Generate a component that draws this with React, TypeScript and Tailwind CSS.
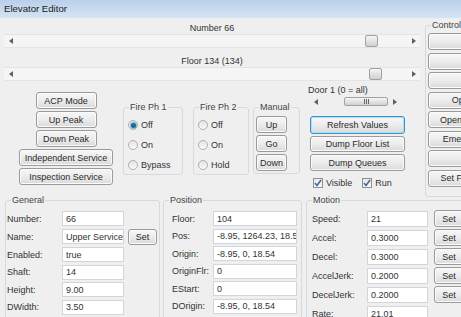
import React from 'react';

type Kids = { children?: React.ReactNode; className?: string };

const Btn: React.FC<Kids & { focus?: boolean }> = ({ children, className = '', focus }) => (
  <div
    className={`flex shrink-0 items-center justify-center overflow-hidden whitespace-nowrap rounded-[3px] border bg-linear-to-b from-[#f7f7f7] via-[#ececec] to-[#dadada] text-[#2a2a2a] ${
      focus ? 'border-[#3d8ec9] shadow-[inset_0_0_0_1px_#a9e1fb]' : 'border-[#9a9a9a] shadow-[inset_0_0_0_1px_#fbfbfb]'
    } ${className}`}
  >
    {children}
  </div>
);

const Group: React.FC<Kids & { label: string }> = ({ label, children, className = '' }) => (
  <div className={`relative shrink-0 rounded-[3px] border border-[#d6dadf] ${className}`}>
    <span className="absolute left-[5px] top-[-7px] whitespace-nowrap bg-[#efefef] px-[1px] leading-[12px] text-[#444]">{label}</span>
    {children}
  </div>
);

const Arrow: React.FC<{ dir: 'l' | 'r' }> = ({ dir }) => (
  <div className="flex w-[13px] shrink-0 items-center justify-center">
    <svg width="4" height="6" viewBox="0 0 4 6">
      <path d={dir === 'l' ? 'M4 0 L0 3 L4 6 Z' : 'M0 0 L4 3 L0 6 Z'} fill="#606060" />
    </svg>
  </div>
);

const Scroll: React.FC<{ className?: string; thumb: string; grip?: boolean }> = ({ className = '', thumb, grip }) => (
  <div className={`flex border-y border-[#e4e4e4] bg-[#f5f5f5] ${className}`}>
    <Arrow dir="l" />
    <div className="flex flex-1 items-center">
      <div
        className={`flex h-full items-center justify-center rounded-[2px] border border-[#a2a2a2] bg-linear-to-b from-[#f6f6f6] to-[#d0d0d0] ${thumb}`}
      >
        {grip && (
          <div className="flex gap-[1px]">
            <div className="h-[5px] w-[1px] bg-[#666]" />
            <div className="h-[5px] w-[1px] bg-[#666]" />
            <div className="h-[5px] w-[1px] bg-[#666]" />
          </div>
        )}
      </div>
    </div>
    <Arrow dir="r" />
  </div>
);

const Radio: React.FC<{ label: string; checked?: boolean }> = ({ label, checked }) => (
  <div className="flex h-[14px] items-center gap-[3px]">
    <div className="flex h-[10px] w-[10px] items-center justify-center rounded-full border border-[#b0b0b0] bg-linear-to-b from-[#e3e3e3] to-[#fafafa]">
      {checked && <div className="h-[5px] w-[5px] rounded-full bg-[#1d6c8c] shadow-[0_0_1px_1px_#79b9d3]" />}
    </div>
    <span className="text-[#333]">{label}</span>
  </div>
);

const Check: React.FC<{ label: string }> = ({ label }) => (
  <div className="flex items-center gap-[3px]">
    <div className="flex h-[10px] w-[10px] items-center justify-center border border-[#8f8f8f] bg-linear-to-b from-[#e8e8e8] to-[#fbfbfb]">
      <svg width="8" height="8" viewBox="0 0 8 8">
        <path d="M1 4 L3 6.5 L7 1" fill="none" stroke="#4660ab" strokeWidth="1.5" />
      </svg>
    </div>
    <span className="text-[#333]">{label}</span>
  </div>
);

const Field: React.FC<{ value: string; className?: string }> = ({ value, className = '' }) => (
  <div className={`flex h-[15px] shrink-0 items-center overflow-hidden whitespace-nowrap border border-[#d2d6db] bg-white pl-[3px] text-[#333] ${className}`}>
    {value}
  </div>
);

const general = [
  ['Number:', '66'],
  ['Name:', 'Upper Service'],
  ['Enabled:', 'true'],
  ['Shaft:', '14'],
  ['Height:', '9.00'],
  ['DWidth:', '3.50'],
];

const position = [
  ['Floor:', '104'],
  ['Pos:', '-8.95, 1264.23, 18.54'],
  ['Origin:', '-8.95, 0, 18.54'],
  ['OriginFlr:', '0'],
  ['EStart:', '0'],
  ['DOrigin:', '-8.95, 0, 18.54'],
];

const motion = [
  ['Speed:', '21', true],
  ['Accel:', '0.3000', true],
  ['Decel:', '0.3000', true],
  ['AccelJerk:', '0.2000', true],
  ['DecelJerk:', '0.2000', true],
  ['Rate:', '21.01', false],
] as const;

const controls = ['', '', '', 'Open Doors', 'Open Shaft Doors', 'Emergency Stop', '', 'Set Floor Number'];

export default function App() {
  return (
    <div className="h-[317px] w-[461px] overflow-hidden bg-[#efefef] font-['Liberation_Sans',sans-serif] text-[9px] leading-[12px]">
      <div className="flex h-[19px] items-center border-b border-[#e9f0f8] bg-linear-to-b from-[#b9d0eb] to-[#d6e4f3] pl-[4px] text-[9.6px] text-[#1b1b1b]">
        Elevator Editor
      </div>

      <div className="w-[560px]">
        <div className="flex h-[181px]">
          <div className="flex w-[424px] shrink-0 flex-col pt-[3px]">
            <div className="h-[12px] text-center text-[#333]">Number 66</div>
            <Scroll className="mx-[4px] h-[14px]" thumb="ml-[348px] w-[13px]" />
            <div className="mt-[7px] h-[12px] text-center text-[#333]">Floor 134 (134)</div>
            <Scroll className="mx-[4px] h-[14px]" thumb="ml-[352px] w-[13px]" />

            <div className="mt-[3px] flex items-start">
              <div className="ml-[19px] flex w-[94px] flex-col items-center gap-[2px] pt-[8px]">
                <Btn className="h-[17px] w-[61px]">ACP Mode</Btn>
                <Btn className="h-[17px] w-[61px]">Up Peak</Btn>
                <Btn className="h-[17px] w-[61px]">Down Peak</Btn>
                <Btn className="h-[17px] w-[94px]">Independent Service</Btn>
                <Btn className="h-[17px] w-[94px]">Inspection Service</Btn>
              </div>

              <Group label="Fire Ph 1" className="ml-[10px] mt-[23px] h-[68px] w-[60px]">
                <div className="flex flex-col gap-[6px] pl-[4px] pt-[10px]">
                  <Radio label="Off" checked />
                  <Radio label="On" />
                  <Radio label="Bypass" />
                </div>
              </Group>

              <Group label="Fire Ph 2" className="ml-[10px] mt-[23px] h-[68px] w-[56px]">
                <div className="flex flex-col gap-[6px] pl-[4px] pt-[10px]">
                  <Radio label="Off" />
                  <Radio label="On" />
                  <Radio label="Hold" />
                </div>
              </Group>

              <Group label="Manual" className="ml-[4px] mt-[23px] h-[67px] w-[47px]">
                <div className="flex flex-col gap-[2px] pl-[2px] pt-[8px]">
                  <Btn className="h-[17px] w-[31px]">Up</Btn>
                  <Btn className="h-[17px] w-[31px]">Go</Btn>
                  <Btn className="h-[17px] w-[31px]">Down</Btn>
                </div>
              </Group>

              <div className="ml-[8px] flex w-[97px] flex-col">
                <div className="h-[12px] text-[#333]">Door 1 (0 = all)</div>
                <Scroll className="ml-[1px] h-[11px] w-[92px] border-transparent bg-transparent" thumb="ml-[22px] w-[44px]" grip />
                <div className="ml-[2px] mt-[9px] flex flex-col gap-[2px]">
                  <Btn focus className="h-[18px] w-[95px]">Refresh Values</Btn>
                  <Btn className="h-[16px] w-[95px]">Dump Floor List</Btn>
                  <Btn className="h-[17px] w-[95px]">Dump Queues</Btn>
                </div>
                <div className="ml-[5px] mt-[6px] flex gap-[10px]">
                  <Check label="Visible" />
                  <Check label="Run" />
                </div>
              </div>
            </div>
          </div>

          <Group label="Control" className="ml-[1px] mt-[6px] h-[172px] w-[110px]">
            <div className="flex flex-col gap-[2.5px] pl-[2px] pt-[7px]">
              {controls.map((c, i) => (
                <Btn key={i} className="h-[17px] w-[96px]">
                  {c}
                </Btn>
              ))}
            </div>
          </Group>
        </div>

        <div className="flex items-start">
          <Group label="General" className="ml-[5px] h-[130px] w-[155px]">
            <div className="flex flex-col gap-[2.6px] pl-[1px] pt-[10px]">
              {general.map(([k, v]) => (
                <div key={k} className="flex items-center">
                  <span className="w-[55px] shrink-0 text-[#333]">{k}</span>
                  <Field value={v} className="w-[62px]" />
                  {k === 'Name:' && <Btn className="ml-[4px] h-[16px] w-[29px]">Set</Btn>}
                </div>
              ))}
            </div>
          </Group>

          <Group label="Position" className="ml-[3px] h-[130px] w-[139px]">
            <div className="flex flex-col gap-[2.6px] pl-[8px] pt-[10px]">
              {position.map(([k, v]) => (
                <div key={k} className="flex items-center">
                  <span className="w-[41px] shrink-0 text-[#333]">{k}</span>
                  <Field value={v} className="w-[84px]" />
                </div>
              ))}
            </div>
          </Group>

          <Group label="Motion" className="ml-[4px] h-[130px] w-[170px]">
            <div className="flex flex-col gap-[2px] pl-[5px] pt-[9px]">
              {motion.map(([k, v, s]) => (
                <div key={k} className="flex h-[17px] items-center">
                  <span className="w-[55px] shrink-0 text-[#333]">{k}</span>
                  <Field value={v} className="h-[16px] w-[61px]" />
                  {s && <Btn className="ml-[6px] h-[17px] w-[30px]">Set</Btn>}
                </div>
              ))}
            </div>
          </Group>
        </div>
      </div>
    </div>
  );
}
